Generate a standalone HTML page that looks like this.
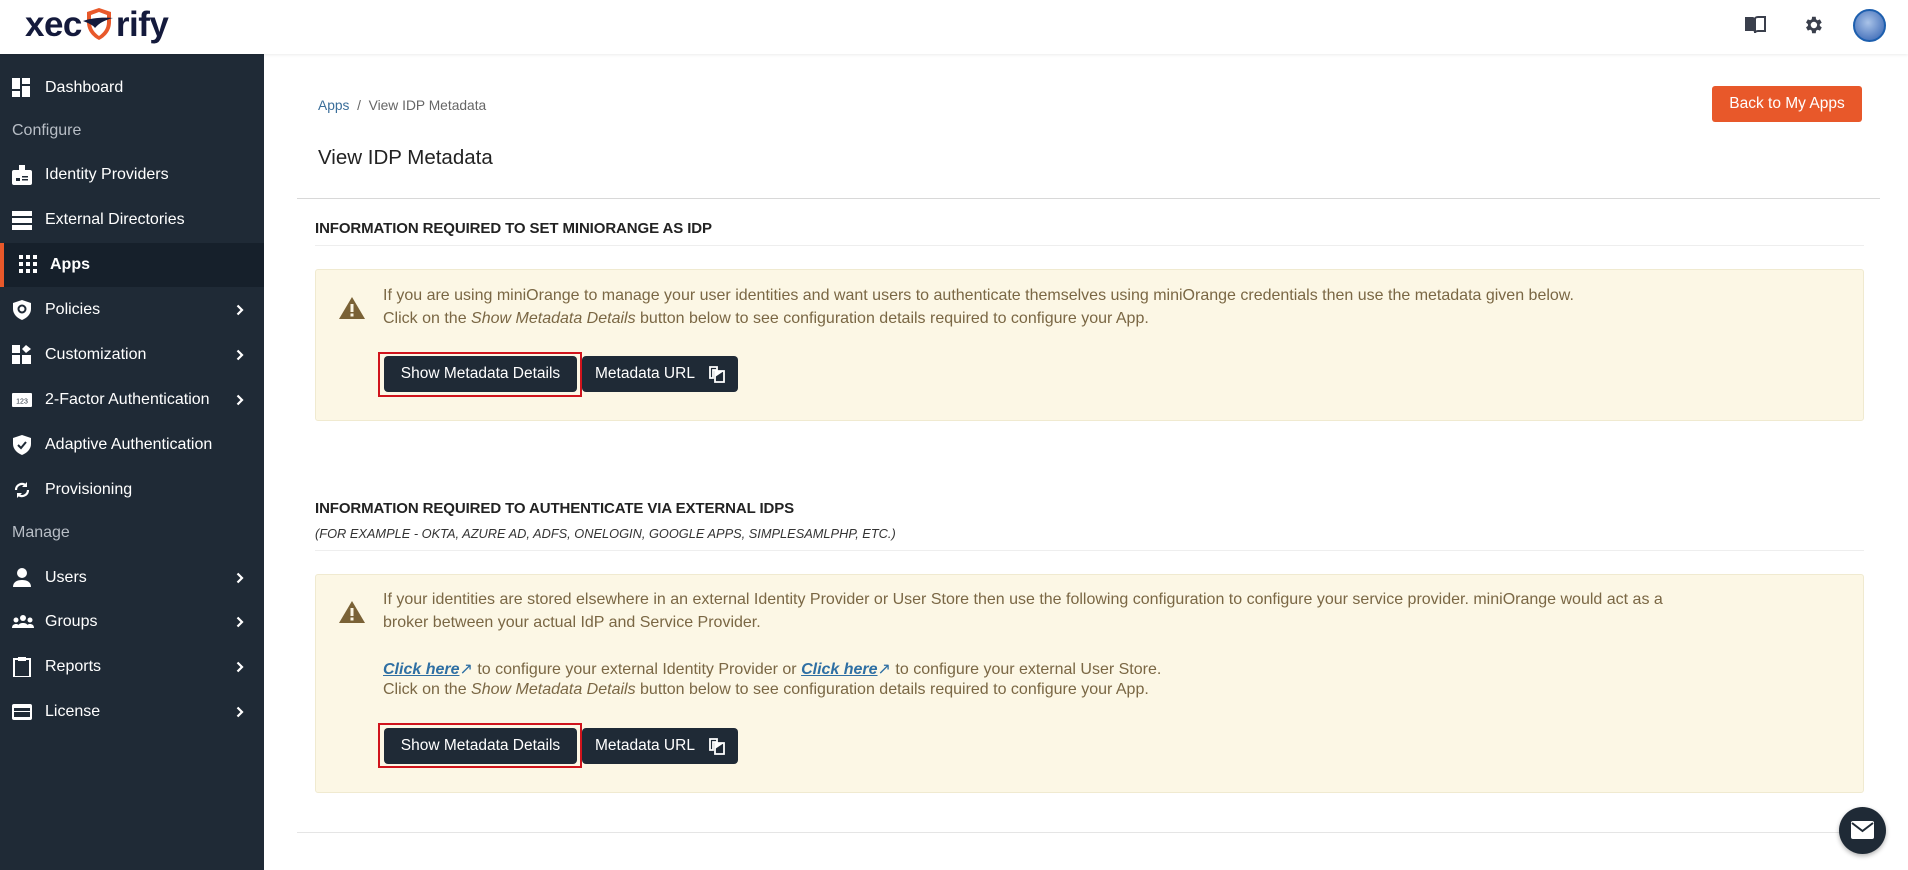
<!DOCTYPE html>
<html><head><meta charset="utf-8"><style>
*{margin:0;padding:0;box-sizing:border-box}
body{width:1908px;height:870px;overflow:hidden;background:#fff;font-family:"Liberation Sans",sans-serif;position:relative;color:#333}
.hdr{position:absolute;left:0;top:0;width:1908px;height:54px;background:#fff;box-shadow:0 1px 3px rgba(0,0,0,.08);z-index:2}
.logo{position:absolute;left:25px;top:5px;font-size:35px;font-weight:bold;color:#141a3c;letter-spacing:-0.5px;white-space:nowrap}
.side{position:absolute;left:0;top:54px;width:264px;height:816px;background:#1f2a36}
.it{position:absolute;left:0;width:264px;height:44px;color:#fff;font-size:16px;line-height:44px;padding-left:45px}
.it svg{position:absolute;left:12px;top:12px}
.it svg.ch{left:236px;top:16px}
.lbl{position:absolute;left:12px;color:#b8bec6;font-size:16px}
.act{background:#16202b;font-weight:bold;padding-left:50px}
.act:before{content:"";position:absolute;left:0;top:0;width:4px;height:44px;background:#e8582a}
.bc{position:absolute;left:318px;top:98px;font-size:13.8px;color:#666}
.bc a{color:#3a6e9a}
.back{position:absolute;left:1712px;top:86px;width:150px;height:36px;background:#e8582a;color:#fff;border-radius:3px;font-size:15.5px;text-align:center;line-height:36px}
h1{position:absolute;left:318px;top:146px;font-size:20.5px;font-weight:normal;color:#222}
.hr{position:absolute;height:1px;background:#ddd}
.sh{position:absolute;left:315px;font-size:15px;color:#222;font-weight:bold;letter-spacing:-0.1px}
.sub{position:absolute;left:315px;font-size:12.8px;font-style:italic;color:#333}
.box{position:absolute;left:315px;width:1549px;background:#fcf7e5;border:1px solid #f0ead0;border-radius:3px}
.tx{position:absolute;left:383px;font-size:16px;color:#7a6744;white-space:nowrap}
.warn{position:absolute;left:339px}
.btn{position:absolute;height:36px;background:#1f2a36;color:#fff;border-radius:4px;font-size:15.5px;line-height:36px;text-align:center}
.red{position:absolute;border:2px solid #d0141c}
.lk{color:#2e6fa3;font-weight:bold;font-style:italic;text-decoration:underline}
</style></head><body>
<div class="hdr">
<div class="logo">xec<svg width="32" height="34" viewBox="0 0 32 34" style="vertical-align:-6px;margin:0 1px"><path d="M4 4l12-4 12 4v10c0 9-6 15-12 18C10 29 4 23 4 14z" fill="#e8582a"/><path d="M8 7l8-3 8 3v7c0 7-4 11-8 14-4-3-8-7-8-14z" fill="#fff"/><path d="M0 13c8-3 20-4 30-3-8 2-14 5-18 10-2-3-7-5-12-7z" fill="#141a3c"/></svg>rify</div>
<svg style="position:absolute;left:1744px;top:16px" width="22" height="18" viewBox="0 0 22 18"><path d="M1 1h7c2 0 3 1 3 2v14c0-1-1-2-3-2H1z" fill="#3a3f4c"/><path d="M21 1h-7c-2 0-3 1-3 2v14c0-1 1-2 3-2h7z" fill="none" stroke="#3a3f4c" stroke-width="2"/></svg>
<svg style="position:absolute;left:1802px;top:14px" width="22" height="22" viewBox="0 0 24 24"><path fill="#3a3f4c" d="M19.4 13a7.5 7.5 0 000-2l2.1-1.6-2-3.5-2.5 1a7 7 0 00-1.7-1L15 3h-4l-.4 2.8a7 7 0 00-1.7 1l-2.5-1-2 3.5L6.5 11a7.5 7.5 0 000 2l-2.1 1.6 2 3.5 2.5-1a7 7 0 001.7 1L11 21h4l.4-2.8a7 7 0 001.7-1l2.5 1 2-3.5zM13 15.5a3.5 3.5 0 110-7 3.5 3.5 0 010 7z"/></svg>
<div style="position:absolute;left:1853px;top:9px;width:33px;height:33px;border-radius:50%;background:radial-gradient(circle at 45% 40%,#a9c3e8,#5f86c6 60%,#2c5fb0);border:2px solid #1d5fae"></div>
</div>
<div class="side">
<div class="it" style="top:12px"><svg width="20" height="20"><rect x="0" y="0" width="8" height="11" fill="#fff"/><rect x="10" y="0" width="8" height="6" fill="#fff"/><rect x="0" y="13" width="8" height="6" fill="#fff"/><rect x="10" y="8" width="8" height="11" fill="#fff"/></svg>Dashboard</div>
<div class="lbl" style="top:68px">Configure</div>
<div class="it" style="top:99px"><svg width="20" height="20"><rect x="0" y="5" width="20" height="15" rx="2" fill="#fff"/><rect x="7" y="0" width="6" height="7" fill="#fff"/><rect x="4" y="13" width="4" height="3" fill="#1f2a36"/><rect x="10" y="11" width="6" height="1.5" fill="#1f2a36"/><rect x="10" y="14" width="6" height="1.5" fill="#1f2a36"/></svg>Identity Providers</div>
<div class="it" style="top:144px"><svg width="20" height="20"><rect y="1" width="20" height="5" fill="#fff"/><rect y="8" width="20" height="5" fill="#fff"/><rect y="15" width="20" height="5" fill="#fff"/></svg>External Directories</div>
<div class="it act" style="top:189px"><svg style="left:19px" width="18" height="18"><g fill="#fff"><rect width="4" height="4"/><rect x="7" width="4" height="4"/><rect x="14" width="4" height="4"/><rect y="7" width="4" height="4"/><rect x="7" y="7" width="4" height="4"/><rect x="14" y="7" width="4" height="4"/><rect y="14" width="4" height="4"/><rect x="7" y="14" width="4" height="4"/><rect x="14" y="14" width="4" height="4"/></g></svg>Apps</div>
<div class="it" style="top:234px"><svg width="20" height="20" viewBox="0 0 20 20"><path d="M10 0l9 3v6c0 5-4 9-9 11C5 18 1 14 1 9V3z" fill="#fff"/><circle cx="10" cy="9" r="3.5" fill="none" stroke="#1f2a36" stroke-width="2"/></svg>Policies<svg class="ch" width="8" height="12" viewBox="0 0 8 12"><path d="M1.5 1.5l4.5 4.5-4.5 4.5" fill="none" stroke="#fff" stroke-width="2.2"/></svg></div>
<div class="it" style="top:279px"><svg width="20" height="20"><rect y="0" width="8" height="8" fill="#fff"/><rect y="10" width="8" height="9" fill="#fff"/><rect x="10" y="10" width="9" height="9" fill="#fff"/><path d="M14 0l5 4-5 4-4-4z" fill="#fff"/></svg>Customization<svg class="ch" width="8" height="12" viewBox="0 0 8 12"><path d="M1.5 1.5l4.5 4.5-4.5 4.5" fill="none" stroke="#fff" stroke-width="2.2"/></svg></div>
<div class="it" style="top:324px"><svg width="20" height="20"><rect y="3" width="20" height="14" rx="1" fill="#fff"/><text x="10" y="13.5" font-size="7" text-anchor="middle" fill="#1f2a36" font-family="Liberation Sans">123</text></svg>2-Factor Authentication<svg class="ch" width="8" height="12" viewBox="0 0 8 12"><path d="M1.5 1.5l4.5 4.5-4.5 4.5" fill="none" stroke="#fff" stroke-width="2.2"/></svg></div>
<div class="it" style="top:369px"><svg width="20" height="20" viewBox="0 0 20 20"><path d="M10 0l9 3v6c0 5-4 9-9 11C5 18 1 14 1 9V3z" fill="#fff"/><path d="M6 10l3 3 5-6" fill="none" stroke="#1f2a36" stroke-width="2"/></svg>Adaptive Authentication</div>
<div class="it" style="top:414px"><svg width="20" height="20" viewBox="0 0 20 20"><path d="M4 10a6 6 0 0110-4.5M16 10a6 6 0 01-10 4.5" fill="none" stroke="#fff" stroke-width="2.2"/><path d="M15 2v5h-5z M5 18v-5h5z" fill="#fff"/></svg>Provisioning</div>
<div class="lbl" style="top:470px">Manage</div>
<div class="it" style="top:502px"><svg width="20" height="20"><circle cx="10" cy="5" r="5" fill="#fff"/><path d="M1 19c0-5 4-7 9-7s9 2 9 7z" fill="#fff"/></svg>Users<svg class="ch" width="8" height="12" viewBox="0 0 8 12"><path d="M1.5 1.5l4.5 4.5-4.5 4.5" fill="none" stroke="#fff" stroke-width="2.2"/></svg></div>
<div class="it" style="top:546px"><svg width="22" height="20"><g fill="#fff"><circle cx="4" cy="8" r="2.5"/><circle cx="11" cy="6" r="3"/><circle cx="18" cy="8" r="2.5"/><path d="M0 16c0-3 2-4 4-4s4 1 4 4zM6 16c0-4 2-5 5-5s5 1 5 5zM14 16c0-3 2-4 4-4s4 1 4 4z"/></g></svg>Groups<svg class="ch" width="8" height="12" viewBox="0 0 8 12"><path d="M1.5 1.5l4.5 4.5-4.5 4.5" fill="none" stroke="#fff" stroke-width="2.2"/></svg></div>
<div class="it" style="top:591px"><svg width="20" height="20"><rect x="2" y="2" width="16" height="18" fill="none" stroke="#fff" stroke-width="2"/><rect x="6" y="0" width="8" height="4" fill="#fff"/></svg>Reports<svg class="ch" width="8" height="12" viewBox="0 0 8 12"><path d="M1.5 1.5l4.5 4.5-4.5 4.5" fill="none" stroke="#fff" stroke-width="2.2"/></svg></div>
<div class="it" style="top:636px"><svg width="20" height="20"><rect x="0" y="2" width="20" height="16" rx="2" fill="#fff"/><rect x="2" y="6" width="16" height="3" fill="#1f2a36"/><rect x="2" y="10" width="16" height="5" fill="#1f2a36"/></svg>License<svg class="ch" width="8" height="12" viewBox="0 0 8 12"><path d="M1.5 1.5l4.5 4.5-4.5 4.5" fill="none" stroke="#fff" stroke-width="2.2"/></svg></div>
</div>

<div class="bc"><a>Apps</a> &nbsp;/&nbsp; View IDP Metadata</div>
<div class="back">Back to My Apps</div>
<h1>View IDP Metadata</h1>
<div class="hr" style="left:297px;top:198px;width:1583px;background:#d8d8d8"></div>

<div class="sh" style="top:220px">INFORMATION REQUIRED TO SET MINIORANGE AS IDP</div>
<div class="hr" style="left:315px;top:245px;width:1549px;background:#eee"></div>
<div class="box" style="top:269px;height:152px"></div>
<svg class="warn" style="top:297px" width="26" height="22" viewBox="0 0 26 22"><path d="M13 0l13 22H0z" fill="#7a6236"/><rect x="11.5" y="7" width="3" height="8" fill="#fcf7e5"/><rect x="11.5" y="16.5" width="3" height="3" fill="#fcf7e5"/></svg>
<div class="tx" style="top:287px">If you are using miniOrange to manage your user identities and want users to authenticate themselves using miniOrange credentials then use the metadata given below.</div>
<div class="tx" style="top:310px">Click on the <i>Show Metadata Details</i> button below to see configuration details required to configure your App.</div>
<div class="red" style="left:378px;top:352px;width:204px;height:45px"></div>
<div class="btn" style="left:384px;top:356px;width:193px">Show Metadata Details</div>
<div class="btn" style="left:582px;top:356px;width:156px;text-align:left;padding-left:13px">Metadata URL <svg style="position:absolute;left:126px;top:9px" width="18" height="18" viewBox="0 0 18 18"><path d="M2 2h7v3H5v8H2z" fill="none" stroke="#fff" stroke-width="1.8"/><path d="M7 6h9v11H7z" fill="none" stroke="#fff" stroke-width="1.8"/><path d="M7 6l9 0-9 6z" fill="#fff"/></svg></div>

<div class="sh" style="top:500px">INFORMATION REQUIRED TO AUTHENTICATE VIA EXTERNAL IDPS</div>
<div class="sub" style="top:526px">(FOR EXAMPLE - OKTA, AZURE AD, ADFS, ONELOGIN, GOOGLE APPS, SIMPLESAMLPHP, ETC.)</div>
<div class="hr" style="left:315px;top:550px;width:1549px;background:#eee"></div>
<div class="box" style="top:574px;height:219px"></div>
<svg class="warn" style="top:601px" width="26" height="22" viewBox="0 0 26 22"><path d="M13 0l13 22H0z" fill="#7a6236"/><rect x="11.5" y="7" width="3" height="8" fill="#fcf7e5"/><rect x="11.5" y="16.5" width="3" height="3" fill="#fcf7e5"/></svg>
<div class="tx" style="top:591px">If your identities are stored elsewhere in an external Identity Provider or User Store then use the following configuration to configure your service provider. miniOrange would act as a</div>
<div class="tx" style="top:614px">broker between your actual IdP and Service Provider.</div>
<div class="tx" style="top:659px"><span class="lk">Click here</span><span style="color:#2e6fa3">&#x2197;</span> to configure your external Identity Provider or <span class="lk">Click here</span><span style="color:#2e6fa3">&#x2197;</span> to configure your external User Store.</div>
<div class="tx" style="top:681px">Click on the <i>Show Metadata Details</i> button below to see configuration details required to configure your App.</div>
<div class="red" style="left:378px;top:723px;width:204px;height:45px"></div>
<div class="btn" style="left:384px;top:728px;width:193px">Show Metadata Details</div>
<div class="btn" style="left:582px;top:728px;width:156px;text-align:left;padding-left:13px">Metadata URL <svg style="position:absolute;left:126px;top:9px" width="18" height="18" viewBox="0 0 18 18"><path d="M2 2h7v3H5v8H2z" fill="none" stroke="#fff" stroke-width="1.8"/><path d="M7 6h9v11H7z" fill="none" stroke="#fff" stroke-width="1.8"/><path d="M7 6l9 0-9 6z" fill="#fff"/></svg></div>
<div class="hr" style="left:297px;top:832px;width:1583px;background:#e5e5e5"></div>

<div style="position:absolute;left:1839px;top:807px;width:47px;height:47px;border-radius:50%;background:#1f2a36;box-shadow:0 2px 5px rgba(0,0,0,.3)"><svg style="position:absolute;left:11px;top:13px" width="25" height="20"><rect x="1" y="1" width="23" height="18" rx="2" fill="#fff"/><path d="M2 3l10.5 8L23 3" fill="none" stroke="#1f2a36" stroke-width="2"/></svg></div>
</body></html>
